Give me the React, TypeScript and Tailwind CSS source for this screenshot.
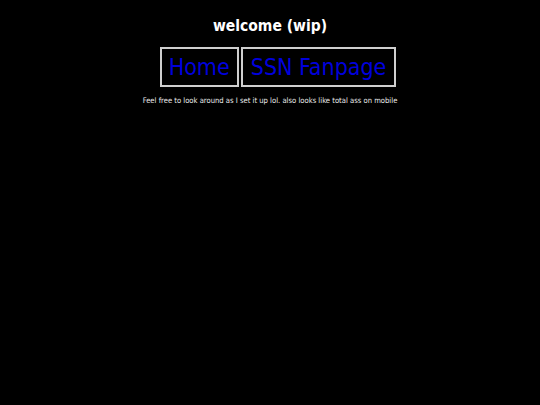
export default function App() {
  return (
    <div className="min-h-[405px] w-full bg-black text-white flex flex-col items-center" style={{ fontFamily: '"DejaVu Sans Condensed", "DejaVu Sans", sans-serif' }}>
      <h1 className="mt-[16px] text-[15.5px] font-bold leading-[20px]">welcome (wip)</h1>
      <nav className="mt-[11px] ml-[16px] flex gap-[2px]">
        <a href="#" className="border-2 border-[#cfcfcf] px-[7px] h-[40px] flex items-center text-[23px] text-[#0000dd]">Home</a>
        <a href="#" className="border-2 border-[#cfcfcf] px-[8px] h-[40px] flex items-center text-[23px] text-[#0000dd]">SSN Fanpage</a>
      </nav>
      <p className="mt-[9px] text-[7.6px] leading-[10px] text-[#ececec]">Feel free to look around as I set it up lol. also looks like total ass on mobile</p>
    </div>
  );
}
